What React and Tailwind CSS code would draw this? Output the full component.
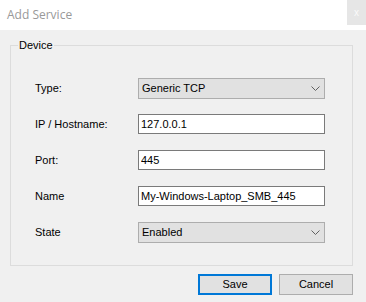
import { useState } from 'react';

const fieldRows = [
  { label: 'Type:', kind: 'combo', value: 'Generic TCP' },
  { label: 'IP / Hostname:', kind: 'text', value: '127.0.0.1' },
  { label: 'Port:', kind: 'text', value: '445' },
  { label: 'Name', kind: 'text', value: 'My-Windows-Laptop_SMB_445' },
  { label: 'State', kind: 'combo', value: 'Enabled' },
];

function Chevron() {
  return (
    <svg width="9" height="5" viewBox="0 0 9 5" className="shrink-0">
      <polyline points="0.5,0.5 4.5,4.5 8.5,0.5" fill="none" stroke="#606060" strokeWidth="1" />
    </svg>
  );
}

export default function App() {
  const [values, setValues] = useState(fieldRows.map(r => r.value));

  return (
    <div className="w-[366px] h-[302px] bg-[#f0f0f0] flex flex-col text-[11px] text-black font-['Liberation_Sans',Arial,sans-serif] overflow-hidden">
      {/* Title bar */}
      <div className="h-[30px] shrink-0 bg-white flex items-start">
        <span className="pl-[7px] pt-[7px] text-[12px] leading-[16px] text-[#999999] font-['Open_Sans',sans-serif]">Add Service</span>
        <div className="ml-auto w-[19px] h-[25px] bg-[#e6e6e6] flex items-center justify-center text-[10px] text-[#fafafa]">x</div>
      </div>

      {/* Group box */}
      <fieldset className="mt-[9px] ml-[10px] w-[343px] h-[227px] border border-[#dcdcdc] p-0 m-0 shrink-0">
        <legend className="ml-[7px] px-[1px] leading-[13px]">Device</legend>
        <div className="flex flex-col gap-[15px] pt-[26px]">
          {fieldRows.map((row, idx) => (
            <div key={row.label} className="flex items-start h-[21px]">
              <span className="w-[127px] pl-[24px] self-center leading-[13px]">{row.label}</span>
              {row.kind === 'combo' ? (
                <div className="w-[187px] h-[21px] border border-[#adadad] bg-[#e1e1e1] flex items-center pl-[3px] pr-[4px]">
                  <span className="flex-1 leading-[13px]">{values[idx]}</span>
                  <Chevron />
                </div>
              ) : (
                <input
                  value={values[idx]}
                  onChange={e => setValues(v => v.map((x, i) => (i === idx ? e.target.value : x)))}
                  className="w-[187px] h-[20px] border border-[#7a7a7a] bg-white px-[2px] outline-none text-[11px] leading-[13px]"
                />
              )}
            </div>
          ))}
        </div>
      </fieldset>

      {/* Buttons */}
      <div className="flex justify-end gap-[7px] pr-[13px] mt-[8px]">
        <button className="w-[74px] h-[21px] border-2 border-[#0078d7] bg-[#e1e1e1] leading-[13px]">Save</button>
        <button className="w-[74px] h-[21px] border border-[#adadad] bg-[#e1e1e1] leading-[13px]">Cancel</button>
      </div>
    </div>
  );
}
